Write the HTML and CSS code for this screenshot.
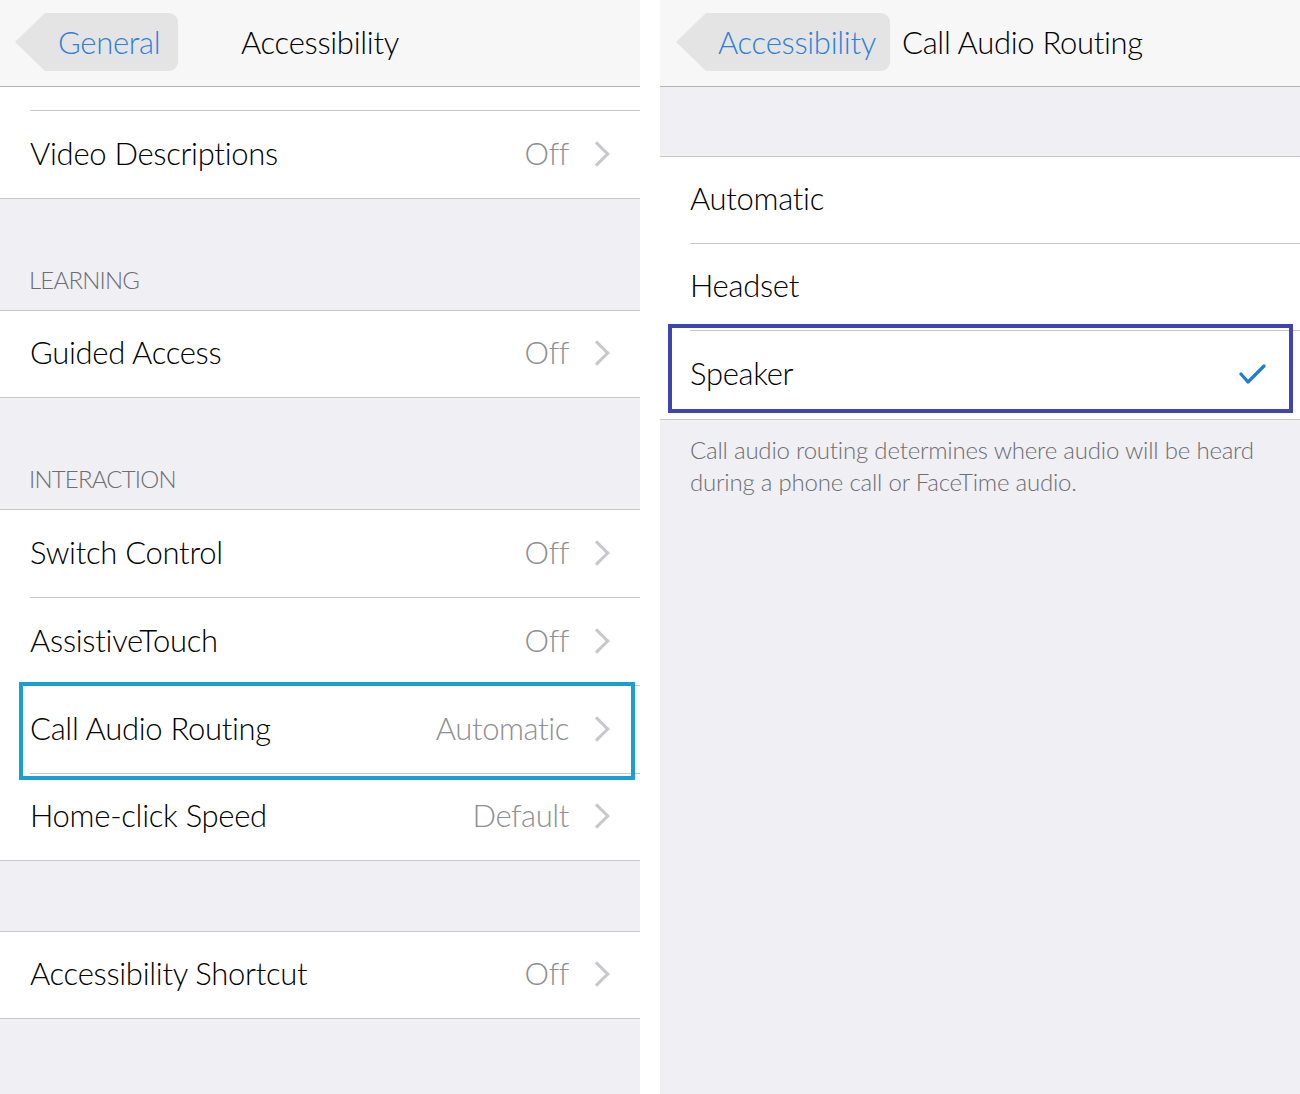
FILE: index.html
```html
<!DOCTYPE html>
<html lang="en">
<head>
<meta charset="utf-8">
<title>Call Audio Routing</title>
<link rel="stylesheet" href="styles.css">
</head>
<body>
<div class="screens">
  <section class="screen">
    <header class="nav">
      <span class="back back-general">General</span>
      <h1 class="title title-centered">Accessibility</h1>
    </header>
    <div class="group group-open">
      <div class="row"><div class="cell cell-partial"></div></div>
      <div class="row">
        <div class="cell cell-video"><span class="label">Video Descriptions</span><span class="value">Off</span><span class="chev"></span></div>
      </div>
    </div>
    <div class="section-head">LEARNING</div>
    <div class="group">
      <div class="row">
        <div class="cell"><span class="label">Guided Access</span><span class="value">Off</span><span class="chev"></span></div>
      </div>
    </div>
    <div class="section-head">INTERACTION</div>
    <div class="group">
      <div class="row">
        <div class="cell"><span class="label">Switch Control</span><span class="value">Off</span><span class="chev"></span></div>
      </div>
      <div class="row">
        <div class="cell"><span class="label">AssistiveTouch</span><span class="value">Off</span><span class="chev"></span></div>
      </div>
      <div class="row row-mark-cyan">
        <div class="cell"><span class="label">Call Audio Routing</span><span class="value">Automatic</span><span class="chev"></span></div>
      </div>
      <div class="row">
        <div class="cell"><span class="label">Home-click Speed</span><span class="value">Default</span><span class="chev"></span></div>
      </div>
    </div>
    <div class="spacer spacer-70"></div>
    <div class="group">
      <div class="row">
        <div class="cell"><span class="label">Accessibility Shortcut</span><span class="value">Off</span><span class="chev"></span></div>
      </div>
    </div>
  </section>

  <section class="screen">
    <header class="nav">
      <span class="back back-access">Accessibility</span>
      <h1 class="title title-after">Call Audio Routing</h1>
    </header>
    <div class="spacer spacer-69"></div>
    <div class="group">
      <div class="row">
        <div class="cell cell-tight"><span class="label">Automatic</span></div>
      </div>
      <div class="row">
        <div class="cell cell-tight"><span class="label">Headset</span></div>
      </div>
      <div class="row row-mark-indigo">
        <div class="cell cell-speaker">
          <span class="label">Speaker</span>
          <svg class="check" width="28" height="22" viewBox="0 0 28 22" aria-hidden="true">
            <polyline points="2,10 9,18 25,2" fill="none" stroke="#1f7ad9" stroke-width="3.2" stroke-linecap="round" stroke-linejoin="round"/>
          </svg>
        </div>
      </div>
    </div>
    <p class="footer">Call audio routing determines where audio will be heard during a phone call or FaceTime audio.</p>
  </section>
</div>
</body>
</html>
```

FILE: styles.css
```css
* { box-sizing: border-box; margin: 0; padding: 0; }

html, body {
  width: 1300px;
  height: 1094px;
  background: #ffffff;
  overflow: hidden;
}

body {
  font-family: "Lato", "Helvetica Neue", "Liberation Sans", sans-serif;
  font-weight: 300;
  color: #000;
}

.screens {
  display: flex;
  gap: 20px;
  height: 1094px;
}

.screen {
  width: 640px;
  height: 1094px;
  background: #efeff4;
  display: flex;
  flex-direction: column;
}

/* nav bar */
.nav {
  height: 87px;
  flex: none;
  background: #f7f7f7;
  border-bottom: 1px solid #b4b4b4;
  display: flex;
  align-items: center;
  padding-bottom: 2px;
}

.back {
  position: relative;
  height: 58px;
  display: flex;
  align-items: center;
  background: #e4e4e4;
  border-radius: 0 9px 9px 0;
  color: #2f80d8;
  font-size: 31px;
  letter-spacing: -0.3px;
}

.back::before {
  content: "";
  position: absolute;
  left: -30px;
  top: 0;
  width: 0;
  height: 0;
  border-right: 30px solid #e4e4e4;
  border-top: 29px solid transparent;
  border-bottom: 29px solid transparent;
}

.back-general {
  margin-left: 45px;
  width: 133px;
  padding-left: 13px;
}

.back-access {
  margin-left: 46px;
  width: 184px;
  padding-left: 12px;
}

.title {
  font-weight: 300;
  font-size: 31px;
  letter-spacing: -0.3px;
}

.title-centered { margin-left: 63px; }
.title-after { margin-left: 12px; }

/* grouped table */
.group {
  background: #fff;
  border-top: 1px solid #c8c7cc;
  border-bottom: 1px solid #c8c7cc;
  flex: none;
}

.group-open { border-top: 0; }

.row {
  position: relative;
  padding-left: 30px;
}

.cell {
  height: 88px;
  display: flex;
  align-items: center;
  padding-right: 31px;
  border-bottom: 1px solid #c8c7cc;
  padding-bottom: 4px;
}

.cell-tight { height: 87px; }

.row:last-child .cell {
  border-bottom: 0;
  height: 86px;
}

.row:last-child .cell-video { height: 87px; }
.row:last-child .cell-speaker { height: 88px; }

.cell-partial {
  height: 24px;
  padding: 0;
}

.label {
  font-size: 31px;
  letter-spacing: -0.3px;
  flex: 1;
}

.value {
  font-size: 31px;
  letter-spacing: -0.4px;
  color: #8e8e93;
  margin-right: 25px;
}

.chev {
  width: 15px;
  height: 26px;
  flex: none;
  position: relative;
}

.chev::before {
  content: "";
  position: absolute;
  width: 15px;
  height: 15px;
  border-top: 3px solid #c7c7cc;
  border-right: 3px solid #c7c7cc;
  transform: rotate(45deg);
  left: -6px;
  top: 5px;
}

.check {
  flex: none;
  margin-right: 2px;
  margin-top: 4px;
}

.section-head {
  height: 111px;
  flex: none;
  display: flex;
  align-items: flex-end;
  padding: 0 0 16px 29px;
  font-size: 24px;
  letter-spacing: -0.8px;
  color: #6d6d72;
}

.spacer { flex: none; }
.spacer-70 { height: 70px; }
.spacer-69 { height: 69px; }

.footer {
  padding: 14px 30px 0 30px;
  font-size: 24px;
  line-height: 32px;
  color: #6d6d72;
  letter-spacing: -0.2px;
}

/* annotation frames */
.row-mark-cyan::after,
.row-mark-indigo::after {
  content: "";
  position: absolute;
  border-style: solid;
  border-width: 4px;
  pointer-events: none;
}

.row-mark-cyan::after {
  left: 19px;
  right: 5px;
  top: -4px;
  bottom: -6px;
  border-color: #1aa0d0;
}

.row-mark-indigo::after {
  left: 8px;
  right: 7px;
  top: -7px;
  bottom: 6px;
  border-color: #3c46ae;
}
```
